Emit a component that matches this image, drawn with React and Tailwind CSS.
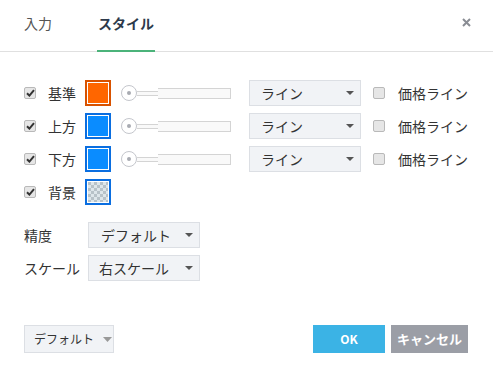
import React, { useState } from 'react';

const font = "font-['Noto_Sans_CJK_JP','Noto_Sans',sans-serif]";

const Check = ({ checked }) => (
  <span className="w-[12px] h-[12px] rounded-[2px] border border-[#b9b9b9] bg-[#e6e6e6] flex items-center justify-center shrink-0">
    {checked && (
      <svg width="9" height="8" viewBox="0 0 9 8">
        <path d="M1 4.2 L3.4 6.6 L8 1.2" fill="none" stroke="#333" strokeWidth="2" />
      </svg>
    )}
  </span>
);

const Caret = ({ color = '#555', w = 8, h = 4 }) => (
  <svg width={w} height={h} viewBox={`0 0 ${w} ${h}`}><path d={`M0 0 H${w} L${w / 2} ${h} Z`} fill={color} /></svg>
);

const Swatch = ({ color, border, checker }) => (
  <div className={`w-[26px] h-[26px] border-2 ${border} p-[1px] bg-white shrink-0`}>
    {checker ? (
      <svg width="20" height="20" viewBox="0 0 20 20">
        <defs>
          <pattern id="chk" width="6" height="6" patternUnits="userSpaceOnUse">
            <rect width="6" height="6" fill="#dde6ea" />
            <rect width="3" height="3" fill="#b7c2c8" />
            <rect x="3" y="3" width="3" height="3" fill="#b7c2c8" />
          </pattern>
        </defs>
        <rect width="20" height="20" fill="url(#chk)" />
      </svg>
    ) : (
      <div className={`w-full h-full ${color}`} />
    )}
  </div>
);

const Slider = () => (
  <div className="flex items-center ml-[10px]">
    <div className="w-[16px] h-[16px] rounded-full border border-[#c4c6cc] bg-white flex items-center justify-center shrink-0">
      <div className="w-[4px] h-[4px] rounded-full bg-[#a8abb2]" />
    </div>
    <div className="w-[21px] h-[5px] border-y border-[#d4d4d4] bg-[#f9f9f9]" />
    <div className="w-[73px] h-[11px] border border-l-0 border-[#d4d4d4] bg-[#f9f9f9]" />
  </div>
);

const Select = ({ label, w = 'w-[112px]', pl = 'pl-[11px]' }) => (
  <div className={`${w} h-[26px] border border-[#dcdfe4] bg-[#f1f3f6] flex items-center justify-between ${pl} pr-[6px] text-[14px] text-[#333]`}>
    <span>{label}</span>
    <Caret />
  </div>
);

const rows = [
  { label: '基準', color: 'bg-[#ff6600]', border: 'border-[#d85200]' },
  { label: '上方', color: 'bg-[#0a8cff]', border: 'border-[#0a6ee0]' },
  { label: '下方', color: 'bg-[#0a8cff]', border: 'border-[#0a6ee0]' },
];

export default function App() {
  const [tab, setTab] = useState('style');
  return (
    <div className={`w-[493px] h-[378px] bg-white ${font} text-[#333] relative`}>
      {/* header tabs */}
      <div className="h-[52px] border-b border-[#e0e0e0] flex items-end px-[24px] relative">
        <button onClick={() => setTab('input')} className="h-full flex items-center text-[14px] text-[#555] pb-[4px]">入力</button>
        <button onClick={() => setTab('style')} className="ml-[45px] h-full flex items-center text-[14px] font-bold text-[#2d3a4b] pb-[4px] border-b-[2px] border-[#4bb37a] mb-[-1px] px-[1px]">スタイル</button>
        <button className="absolute right-[22px] top-[18px]">
          <svg width="9" height="9" viewBox="0 0 9 9">
            <path d="M1 1 L8 8 M8 1 L1 8" stroke="#8a8d94" strokeWidth="2" />
          </svg>
        </button>
      </div>

      <div className="pl-[24px] pt-[28px]">
        {rows.map((r) => (
          <div key={r.label} className="flex items-center h-[26px] mb-[7px]">
            <Check checked />
            <span className="ml-[12px] w-[37px] text-[14px]">{r.label}</span>
            <Swatch color={r.color} border={r.border} />
            <Slider />
            <div className="ml-[18px]"><Select label="ライン" /></div>
            <div className="ml-[12px]"><Check /></div>
            <span className="ml-[13px] text-[14px]">価格ライン</span>
          </div>
        ))}
        <div className="flex items-center h-[26px]">
          <Check checked />
          <span className="ml-[12px] w-[37px] text-[14px]">背景</span>
          <Swatch border="border-[#0a6ee0]" checker />
        </div>

        <div className="flex items-center h-[26px] mt-[17px]">
          <span className="w-[64px] text-[14px]">精度</span>
          <Select label="デフォルト" pl="pl-[12px]" />
        </div>
        <div className="flex items-center h-[26px] mt-[7px]">
          <span className="w-[64px] text-[14px]">スケール</span>
          <Select label="右スケール" pl="pl-[10px]" />
        </div>
      </div>

      {/* footer */}
      <div className="absolute left-[24px] right-[25px] top-[325px] flex items-center justify-between">
        <div className="h-[28px] w-[90px] border border-[#dcdfe4] bg-[#f1f3f6] flex items-center pl-[9px] gap-[9px] text-[12px] whitespace-nowrap">
          <span>デフォルト</span>
          <Caret color="#999" w={9} h={5} />
        </div>
        <div className="flex gap-[6px]">
          <button className="w-[72px] h-[28px] bg-[#3bb3e5] text-white text-[12px] font-bold">OK</button>
          <button className="w-[77px] h-[28px] bg-[#9b9ea6] text-white text-[13px] font-bold">キャンセル</button>
        </div>
      </div>
    </div>
  );
}
